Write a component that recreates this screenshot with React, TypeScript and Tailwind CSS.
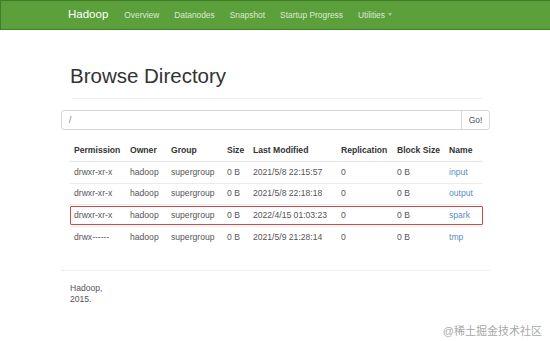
import { FC } from "react";

const rows = [
  { perm: "drwxr-xr-x", owner: "hadoop", group: "supergroup", size: "0 B", mod: "2021/5/8 22:15:57", rep: "0", block: "0 B", name: "input" },
  { perm: "drwxr-xr-x", owner: "hadoop", group: "supergroup", size: "0 B", mod: "2021/5/8 22:18:18", rep: "0", block: "0 B", name: "output" },
  { perm: "drwxr-xr-x", owner: "hadoop", group: "supergroup", size: "0 B", mod: "2022/4/15 01:03:23", rep: "0", block: "0 B", name: "spark", marked: true },
  { perm: "drwx------", owner: "hadoop", group: "supergroup", size: "0 B", mod: "2021/5/9 21:28:14", rep: "0", block: "0 B", name: "tmp" },
];

const cols = "grid grid-cols-[56px_41px_56px_26px_88px_56px_52px_37px]";

const App: FC = () => {
  return (
    <div className="relative w-[550px] h-[341px] overflow-hidden bg-white font-['Liberation_Sans',Arial,sans-serif] text-[#333]">
      <nav className="h-[30px] bg-[#5ba03b] border-t border-b border-l border-[#3f7d28] flex items-center pl-[67px]">
        <span className="text-white text-[11.5px] mr-[16px]">Hadoop</span>
        <div className="flex items-center gap-[15px] text-[8.4px] text-[#dbead2]">
          <span>Overview</span>
          <span>Datanodes</span>
          <span>Snapshot</span>
          <span>Startup Progress</span>
          <span className="flex items-center gap-[3px]">
            <span>Utilities</span>
            <span className="w-0 h-0 border-l-[2.5px] border-r-[2.5px] border-t-[3px] border-l-transparent border-r-transparent border-t-[#a9cc98]" />
          </span>
        </div>
      </nav>

      <div className="ml-[61px] w-[429px]">
        <h1 className="mt-[34px] ml-[9px] text-[20.5px] leading-[24px] text-[#333]">Browse Directory</h1>
        <div className="mt-[10px] ml-[11px] mr-[8px] h-px bg-[#f0f0f0]" />

        <div className="mt-[11px] flex h-[20px] border border-[#d6d6d6] rounded-[3px] text-[8.5px]">
          <div className="flex-1 flex items-center pl-[7px] text-[#777]">/</div>
          <div className="w-[28px] border-l border-[#d6d6d6] flex items-center justify-center text-[#555]">Go!</div>
        </div>

        <div className="mt-[10px] ml-[9px] w-[412px] text-[8.6px]">
          <div className={`${cols} h-[22px] items-center font-bold text-[#333] border-b border-[#e4e4e4]`}>
            <span className="pl-[4px]">Permission</span>
            <span className="pl-[4px]">Owner</span>
            <span className="pl-[4px]">Group</span>
            <span className="pl-[4px]">Size</span>
            <span className="pl-[4px]">Last Modified</span>
            <span className="pl-[4px]">Replication</span>
            <span className="pl-[4px]">Block Size</span>
            <span className="pl-[4px]">Name</span>
          </div>
          {rows.map((r, i) => (
            <div
              key={r.name}
              className={`${cols} relative h-[21.5px] items-center text-[#555] ${i < rows.length - 1 ? "border-b border-[#ececec]" : ""}`}
            >
              <span className="pl-[4px]">{r.perm}</span>
              <span className="pl-[4px]">{r.owner}</span>
              <span className="pl-[4px]">{r.group}</span>
              <span className="pl-[4px]">{r.size}</span>
              <span className="pl-[4px]">{r.mod}</span>
              <span className="pl-[4px]">{r.rep}</span>
              <span className="pl-[4px]">{r.block}</span>
              <span className="pl-[4px] text-[#5a8fc4]">{r.name}</span>
              {r.marked && (
                <div className="absolute left-0 right-[-1px] top-[1px] bottom-[1px] border-[1.5px] border-[#d2474a] rounded-[1px]" />
              )}
            </div>
          ))}
        </div>

        <div className="mt-[22px] h-px bg-[#eeeeee]" />
        <div className="mt-[12px] ml-[9px] text-[8.6px] leading-[11px] text-[#555]">
          <div>Hadoop,</div>
          <div>2015.</div>
        </div>
      </div>

      <div className="absolute right-[8px] bottom-[2px] text-[11px] text-[#a8a8a8] font-['Liberation_Sans','Noto_Sans_CJK_SC',sans-serif]">
        @稀土掘金技术社区
      </div>
    </div>
  );
};

export default App;
